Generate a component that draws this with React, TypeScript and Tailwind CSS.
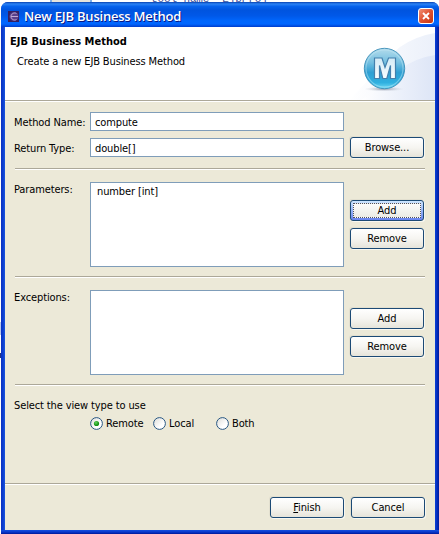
import type { ReactNode } from "react";

function Button({ children, focused = false }: { children: ReactNode; focused?: boolean }) {
  return (
    <button
      className={
        "relative flex h-[21px] w-[74px] shrink-0 items-center justify-center rounded-[3px] border border-[#1c4a75] shadow-[1px_1px_0_#f8f7f0,-1px_-1px_0_#e2dfcf] " +
        (focused
          ? "bg-linear-to-b from-[#cee7ff] to-[#6982ee]"
          : "bg-linear-to-b from-white via-[#f6f5f1] to-[#e6e4da]")
      }
    >
      {focused && (
        <span className="absolute inset-x-[2px] inset-y-[2px] border border-dotted border-[#505060] bg-linear-to-b from-[#fcfcfb] to-[#ecebe5]" />
      )}
      <span className="relative">{children}</span>
    </button>
  );
}

function Divider() {
  return <div className="mr-[10px] ml-[10px] h-[2px] shrink-0 border-t border-[#aca899] bg-white" />;
}

function Radio({ label, checked = false, width }: { label: ReactNode; checked?: boolean; width: string }) {
  return (
    <label className={"flex h-[13px] items-center gap-[3px] " + width}>
      <svg width="13" height="13" viewBox="0 0 13 13" className="shrink-0">
        <defs>
          <linearGradient id="radioFace" x1="0" y1="0" x2="1" y2="1">
            <stop offset="0" stopColor="#dcdcd7" />
            <stop offset=".65" stopColor="#fff" />
          </linearGradient>
          <radialGradient id="radioDot" cx=".4" cy=".35">
            <stop offset="0" stopColor="#62d55c" />
            <stop offset="1" stopColor="#179318" />
          </radialGradient>
        </defs>
        <circle cx="6.5" cy="6.5" r="5.9" fill="url(#radioFace)" stroke="#275682" strokeWidth="1" />
        {checked && <circle cx="6.5" cy="6.5" r="2.6" fill="url(#radioDot)" />}
      </svg>
      <span>{label}</span>
    </label>
  );
}

function MethodBadge() {
  return (
    <svg width="86" height="73" viewBox="0 0 86 73" className="shrink-0">
      <defs>
        <linearGradient id="swoop" x1="0" x2="1" y1="0" y2="0">
          <stop offset="0" stopColor="#fff" />
          <stop offset=".45" stopColor="#eef2fb" />
          <stop offset="1" stopColor="#dde5f6" />
        </linearGradient>
        <linearGradient id="swoopOuter" x1="0" x2="1" y1="0" y2="0">
          <stop offset="0" stopColor="#fff" />
          <stop offset="1" stopColor="#ebf0fa" />
        </linearGradient>
        <linearGradient id="ball" x1="0" y1="0" x2="0" y2="1">
          <stop offset="0" stopColor="#b4dcec" />
          <stop offset=".35" stopColor="#74bfe0" />
          <stop offset=".6" stopColor="#2f9fd3" />
          <stop offset=".85" stopColor="#2fb0e0" />
          <stop offset="1" stopColor="#6fdaf5" />
        </linearGradient>
        <linearGradient id="letter" x1="0" y1="0" x2="0" y2="1">
          <stop offset="0" stopColor="#d3eaf5" />
          <stop offset="1" stopColor="#f8fdff" />
        </linearGradient>
        <radialGradient id="shade">
          <stop offset="0" stopColor="#64728a" stopOpacity=".75" />
          <stop offset="1" stopColor="#c5cad4" stopOpacity="0" />
        </radialGradient>
      </defs>
      <path d="M0 73C20 54 37 31 51 20Q67 9 86 6V73Z" fill="url(#swoopOuter)" />
      <path d="M12 73Q34 62 52 42Q66 31 86 28V73Z" fill="url(#swoop)" />
      <ellipse cx="35" cy="62" rx="20" ry="2.5" fill="url(#shade)" />
      <circle cx="35.5" cy="41.5" r="20.2" fill="url(#ball)" stroke="#3d8fb8" strokeWidth=".9" />
      <circle cx="35.5" cy="41.5" r="18.5" fill="none" stroke="#c8ecf6" strokeWidth="1.1" opacity=".45" />
      <path
        d="M25.500 51.500V31H33L36 40.500L39.500 31H46.500V51.500H41.500V38.500L37.800 51.500H33.800L30.500 38.500V51.500Z"
        fill="url(#letter)"
        stroke="#4380ad"
        strokeWidth="1.2"
      />
    </svg>
  );
}

export default function App() {
  return (
    <div className="relative h-[534px] w-[439px] overflow-hidden bg-white font-['DejaVu_Sans_Condensed','DejaVu_Sans',sans-serif] text-[11px] leading-[13px] tracking-[-0.12px] text-black [font-stretch:condensed]">
      <div className="absolute top-[-7px] left-[151px] font-['Liberation_Mono',monospace] text-[11px] tracking-[-0.12px] whitespace-pre text-[#3b4f9b]">
        tool-name= EjbProj
      </div>
      <div className="absolute top-0 left-[50px] h-[2px] w-[42px] border-x-2 border-[#7baee9] bg-[#e5e3db]" />
      <div className="absolute top-[322px] left-0 h-[13px] w-px bg-[#b7c7ee]" />
      <div className="absolute top-[353px] left-0 h-[5px] w-px bg-[#233384]" />

      <div className="absolute top-[2px] left-px flex h-[532px] w-[438px] flex-col rounded-t-[7px] bg-[linear-gradient(90deg,#0a2fc0_0px,#0b3fd0_2px,#1a55e0_4px,#0a3fd6_5px,#0a3fd6_434px,#0838cc_435px,#001a9c_438px)] px-[4px]">
        <div className="-mx-[4px] flex h-[25px] shrink-0 items-center rounded-t-[7px] bg-[linear-gradient(180deg,#0841b0_0%,#2b82f4_8%,#0662ec_18%,#0054df_32%,#0058e8_55%,#0066fc_75%,#0066ff_88%,#003dcc_100%)] pr-[5px] pl-[7px]">
          <svg width="11" height="11" viewBox="0 0 11 11" className="mt-[3px] shrink-0">
            <rect width="11" height="11" fill="#352060" />
            <circle cx="6" cy="5.5" r="4.500" fill="#59408b" />
            <path d="M8.500 2.500C6 1 3 3 3 5.500S6 10 8.500 8.500M3 5.500H10" fill="none" stroke="#c0aad4" strokeWidth="1" />
          </svg>
          <h1 className="ml-[5px] pt-[2px] font-['Open_Sans','Noto_Sans',sans-serif] text-[13px] leading-[18px] font-semibold tracking-[-0.22px] whitespace-nowrap text-white [font-stretch:normal] [text-shadow:1px_1px_0_#0a1883]">
            New EJB Business Method
          </h1>
          <button className="mt-[2px] ml-auto flex h-[16px] w-[16px] items-center justify-center rounded-[3px] border border-white bg-linear-to-br from-[#f09075] via-[#df5130] to-[#c5340c]">
            <svg width="8" height="8" viewBox="0 0 8 8">
              <path d="M1 1L7 7M7 1L1 7" stroke="#fff" strokeWidth="1.900" />
            </svg>
          </button>
        </div>

        <div className="flex min-h-0 w-[430px] flex-1 flex-col bg-[#ece9d8]">
          <header className="flex h-[73px] shrink-0 justify-between bg-white">
            <div className="whitespace-nowrap">
              <h2 className="mt-[8px] ml-[5px] font-bold tracking-[0.02px]">EJB Business Method</h2>
              <p className="mt-[7px] ml-[12px]">Create a new EJB Business Method</p>
            </div>
            <MethodBadge />
          </header>
          <div className="h-[2px] shrink-0 border-t border-[#aca899] bg-white" />

          <section className="mt-[10px] grid h-[47px] shrink-0 grid-cols-[76px_254px_74px] grid-rows-[19px_21px] gap-y-[6px] pl-[9px]">
            <span className="self-center pt-px whitespace-nowrap">Method Name:</span>
            <div className="flex h-[19px] items-center border border-[#7f9db9] bg-white pt-px pl-[4px]">compute</div>
            <span />
            <span className="self-center pt-px whitespace-nowrap">Return Type:</span>
            <div className="flex h-[19px] items-center self-center border border-[#7f9db9] bg-white pt-px pl-[4px]">double[]</div>
            <div className="pl-[6px]"><Button>Browse...</Button></div>
          </section>

          <div className="mt-[9px]"><Divider /></div>

          <section className="mt-[12px] flex h-[85px] shrink-0 pl-[9px]">
            <span className="w-[76px] shrink-0 pt-px">Parameters:</span>
            <div className="w-[254px] shrink-0 border border-[#7f9db9] bg-white pt-[2px] pl-[6px]">number [int]</div>
            <div className="flex flex-col gap-[7px] pt-[18px] pl-[6px]">
              <Button focused>Add</Button>
              <Button>Remove</Button>
            </div>
          </section>

          <div className="mt-[9px]"><Divider /></div>

          <section className="mt-[12px] flex h-[85px] shrink-0 pl-[9px]">
            <span className="w-[76px] shrink-0 pt-px">Exceptions:</span>
            <div className="w-[254px] shrink-0 border border-[#7f9db9] bg-white" />
            <div className="flex flex-col gap-[7px] pt-[18px] pl-[6px]">
              <Button>Add</Button>
              <Button>Remove</Button>
            </div>
          </section>

          <div className="mt-[9px]"><Divider /></div>

          <section className="mt-[13px] shrink-0 pl-[9px]">
            <p>Select the view type to use</p>
            <div className="mt-[5px] ml-[76px] flex">
              <Radio label="Remote" checked width="w-[63px]" />
              <Radio label="Local" width="w-[63px]" />
              <Radio label="Both" width="w-[63px]" />
            </div>
          </section>

          <footer className="mt-auto h-[47px] shrink-0 border-t border-[#aca899]">
            <div className="h-px bg-white" />
            <div className="mt-[12px] flex justify-end gap-[7px] pr-[10px]">
              <Button><span className="underline underline-offset-1">F</span>inish</Button>
              <Button>Cancel</Button>
            </div>
          </footer>
        </div>
        <div className="-mx-[4px] h-[4px] shrink-0 bg-linear-to-b from-[#1450e0] via-[#0a38cc] to-[#00179a]" />
      </div>
    </div>
  );
}
